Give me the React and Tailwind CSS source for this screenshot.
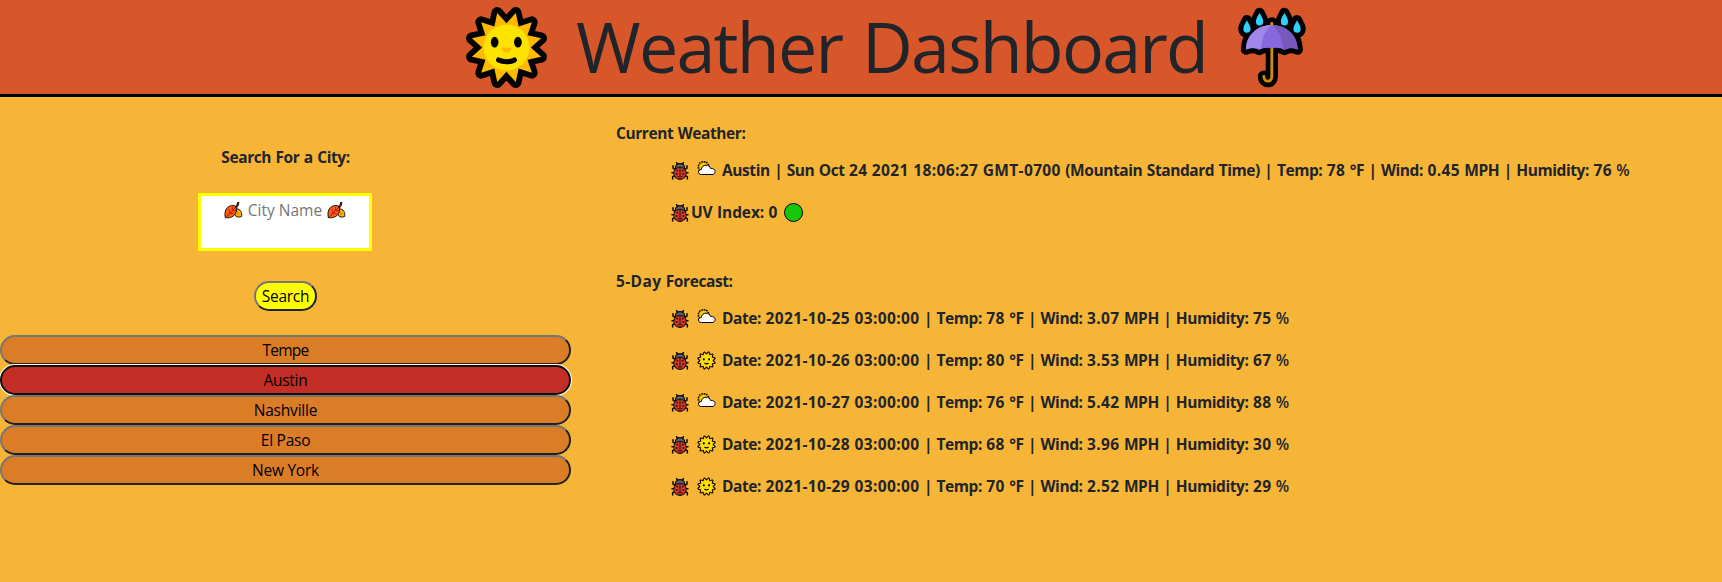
import React from "react";

const CITIES = [
  { name: "Tempe", tracking: "tracking-[-0.75px]" },
  { name: "Austin", tracking: "tracking-[-0.3px]", active: true },
  { name: "Nashville", tracking: "tracking-[-0.2px]" },
  { name: "El Paso", tracking: "tracking-[-0.25px]" },
  { name: "New York", tracking: "tracking-[-0.25px]" },
];

const FORECAST = [
  { icon: "cloud", text: "Date: 2021-10-25 03:00:00 | Temp: 78 °F | Wind: 3.07 MPH | Humidity: 75 %" },
  { icon: "sun", text: "Date: 2021-10-26 03:00:00 | Temp: 80 °F | Wind: 3.53 MPH | Humidity: 67 %" },
  { icon: "cloud", text: "Date: 2021-10-27 03:00:00 | Temp: 76 °F | Wind: 5.42 MPH | Humidity: 88 %" },
  { icon: "sun", text: "Date: 2021-10-28 03:00:00 | Temp: 68 °F | Wind: 3.96 MPH | Humidity: 30 %" },
  { icon: "sun", text: "Date: 2021-10-29 03:00:00 | Temp: 70 °F | Wind: 2.52 MPH | Humidity: 29 %" },
];

/* Rays sit symmetrically either side of the vertical axis. */
function starPoints(count, outer, inner) {
  const pts = [];
  for (let i = 0; i < count * 2; i++) {
    const r = i % 2 === 0 ? outer : inner;
    const a = (Math.PI / count) * (i + 1) - Math.PI / 2;
    pts.push(`${(r * Math.cos(a)).toFixed(2)},${(r * Math.sin(a)).toFixed(2)}`);
  }
  return pts.join(" ");
}

const SUN_BIG = starPoints(12, 35.4, 24);
const SUN_SMALL = starPoints(12, 36, 26);

function SunFace({ className, small }) {
  const pts = small ? SUN_SMALL : SUN_BIG;
  return (
    <svg className={className} viewBox="-41 -41 82 82" aria-hidden="true">
      <polygon points={pts} fill="#000" stroke="#000" strokeWidth={small ? 9 : 11.5} strokeLinejoin="round" />
      <polygon points={pts} fill={small ? "#ffc800" : "#ffb900"} />
      <circle r={small ? 24 : 22.7} fill="#fde300" />
      <ellipse cx="-11.7" cy="-5.2" rx="3.8" ry="5.3" />
      <ellipse cx="11.3" cy="-5.2" rx="3.8" ry="5.3" />
      <path d="M-5 0.3H5C4.4 3.6 2.4 5.3 0 5.3S-4.4 3.6-5 0.3Z" fill="#ffb900" />
      <path d="M-7.8 12.3C-3.6 14.6 3.6 14.6 7.8 12.3" fill="none" stroke="#000" strokeWidth="5" strokeLinecap="round" />
    </svg>
  );
}

function Umbrella({ className }) {
  const canopy =
    "M197 149C197 106 231 75 275 75S353 106 353 149C341 143 326 143 313 150C301 143 288 142 275 145C262 142 249 143 237 150C224 143 209 143 197 149Z";
  const handle = "M275 70V229C275 250 251 248 251 230";
  const drops = ["M200 60C204 69 211 77 211 87A11 11 0 0 1 189 87C189 77 196 69 200 60Z",
    "M238 38C242 47 249 55 249 65A11 11 0 0 1 227 65C227 55 234 47 238 38Z",
    "M313 38C317 47 324 55 324 65A11 11 0 0 1 302 65C302 55 309 47 313 38Z",
    "M351 60C355 69 362 77 362 87A11 11 0 0 1 340 87C340 77 347 69 351 60Z"];
  return (
    <svg className={className} viewBox="173 21 205 243" aria-hidden="true">
      <g fill="#000" stroke="#000" strokeLinejoin="round" strokeLinecap="round">
        <path d={canopy} strokeWidth="31" />
        <path d={handle} fill="none" strokeWidth="37" />
        {drops.map((d) => <path key={d} d={d} strokeWidth="31" />)}
      </g>
      {drops.map((d) => <path key={d} d={d} fill="#30d0fb" />)}
      <path d={handle} fill="none" stroke="#d18d00" strokeWidth="8.5" strokeLinecap="round" />
      <path d={canopy} fill="#8669dd" />
      <path d="M197 149C197 106 231 75 275 75C255 90 243 118 243 147C228 143 209 143 197 149Z" fill="#9f88ea" />
      <path d="M353 149C353 106 319 75 275 75C295 90 308 118 309 147C326 143 341 143 353 149Z" fill="#7759bd" />
      <rect x="271" y="68" width="8" height="8" fill="#d18d00" />
    </svg>
  );
}

function Ladybug({ className }) {
  return (
    <svg className={className} viewBox="0 0 54 54" aria-hidden="true">
      <g fill="none" stroke="#0b0b0b" strokeWidth="4.6" strokeLinecap="round">
        <path d="M20 8L17 2M34 8L37 2M12 22L6 18V11M42 22L48 18V11M10 32H3M44 32H51M12 40L5 44V51M42 40L49 44V51" />
      </g>
      <path d="M13 20C12 10 19 5 27 5S42 10 41 20Z" fill="#5a5f66" stroke="#0b0b0b" strokeWidth="3.4" />
      <ellipse cx="27" cy="34" rx="18.5" ry="18.5" fill="#d63a28" stroke="#1c1413" strokeWidth="3.2" />
      <path d="M27 15V51" stroke="#3b1512" strokeWidth="3.4" />
      <g fill="#35100e">
        <circle cx="19" cy="26" r="2.8" />
        <circle cx="35" cy="26" r="2.8" />
        <circle cx="17" cy="36" r="2.8" />
        <circle cx="37" cy="36" r="2.8" />
        <circle cx="22" cy="44" r="2.3" />
        <circle cx="32" cy="44" r="2.3" />
      </g>
    </svg>
  );
}

function CloudSun({ className }) {
  return (
    <svg className={className} viewBox="0 0 57 57" aria-hidden="true">
      <circle cx="20" cy="18" r="16" fill="none" stroke="#000" strokeWidth="5" strokeDasharray="4.2 3.2" />
      <circle cx="20" cy="18" r="14.5" fill="#fcc800" stroke="#1b1500" strokeWidth="1.6" />
      <path
        d="M13 40.5C7 40.5 4.5 36.5 4.5 33C4.5 28.5 8 26 12.5 26C14 17 20 12.5 27 12.5C34 12.5 38.5 16 40.5 22C49 21.5 54.5 26 54.5 31.5C54.5 37 50.5 40.5 45 40.5Z"
        fill="#fff"
        stroke="#000"
        strokeWidth="3"
        strokeLinejoin="round"
      />
    </svg>
  );
}

function Leaf({ className }) {
  return (
    <svg className={className} viewBox="0 0 57 53" aria-hidden="true">
      <path d="M36 22C45 20 54 28 54 36C54 40 55 43 54 45C47 49 37 47 33 41C30 34 31 26 36 22Z" fill="#fdb40a" stroke="#111" strokeWidth="3" />
      <path d="M41 28L43 43M38 37L50 35" stroke="#d98200" strokeWidth="2" fill="none" />
      <path d="M3 49C1 38 1 26 9 18C17 10 29 8 37 15C40 24 38 35 30 42C22 49 12 50 3 49Z" fill="#f7630c" stroke="#111" strokeWidth="3" strokeLinejoin="round" />
      <path d="M6 47L37 15M16 36L15 22M16 36L30 36M25 27L25 15M25 27L36 27" stroke="#c8201c" strokeWidth="3.4" fill="none" />
      <path d="M37 16C42 12 42 7 43 3" stroke="#111" strokeWidth="7" strokeLinecap="round" fill="none" />
      <path d="M36 17C41 12 42 8 43 4" stroke="#a4161a" strokeWidth="2.6" fill="none" />
    </svg>
  );
}

/* Words, figures and spaces each carry their own tracking. */
function Line({ text }) {
  return (
    <span className="whitespace-pre text-[15.5px] font-bold leading-6">
      {text.split(/( )/).map((t, i) => {
        if (t === " ") return <span key={i} className="tracking-[0.38px]"> </span>;
        if (t === "%") return <span key={i} className="font-semibold">%</span>;
        if (t === "UV" || t === "Index:") return <span key={i} className="tracking-[-0.1px]">{t}</span>;
        if (/\d/.test(t)) return <span key={i} className="tracking-[0.37px]">{t}</span>;
        return <span key={i} className="tracking-[-0.42px]">{t}</span>;
      })}
    </span>
  );
}

function WeatherRow({ icon, text }) {
  return (
    <li className="flex h-6 items-center">
      <Ladybug className="mt-px h-[18px] w-[18px]" />
      {icon === "cloud" && <CloudSun className="mt-px ml-2 h-[19px] w-[19px]" />}
      {icon === "sun" && <SunFace small className="mt-px ml-2 h-[19px] w-[19px]" />}
      <span className="ml-[6px] flex">
        <Line text={text} />
      </span>
    </li>
  );
}

export default function App() {
  return (
    <div className="flex min-h-[582px] flex-col bg-[#f7b538] font-['Open_Sans','Noto_Sans',sans-serif] text-[#212529]">
      <header className="flex h-[97px] items-center border-b-[3px] border-black bg-[#d8572a] pl-[465px]">
        <SunFace className="mt-px h-[83px] w-[83px]" />
        <h1 className="ml-[28px] w-[627px] whitespace-pre pb-px text-[70px] leading-[93px]">
          <span className="tracking-[-1.75px]">Weather</span>
          <span className="tracking-[1.5px]"> </span>
          <span className="tracking-[-1.8px]">Dashboard</span>
        </h1>
        <Umbrella className="mt-px ml-[35px] h-[81px] w-[68px]" />
      </header>

      <div className="flex">
        <section className="flex w-[571px] flex-col items-center pt-12">
          <h2 className="flex"><Line text="Search For a City:" /></h2>
          <div className="mt-6 mr-px flex h-[58px] w-[174px] justify-center border-[3px] border-[#ff0] bg-white pt-0.5">
            <div className="flex h-6 items-center text-[15.5px] leading-6 text-[#757575]">
              <Leaf className="h-[17px] w-[19px]" />
              <span className="mx-[5px] whitespace-pre">City Name</span>
              <Leaf className="h-[17px] w-[19px]" />
            </div>
          </div>
          <button className="mt-[30px] h-[30px] w-[63px] rounded-[15px] border-2 border-t-[#767676] border-r-[#212121] border-b-[#212121] border-l-[#767676] bg-[#ff0] text-[15.5px] leading-[26px] tracking-[-0.3px] text-black">
            Search
          </button>
          <div className="mt-6 flex w-full flex-col">
            {CITIES.map((c) => (
              <button
                key={c.name}
                className={
                  "h-[30px] w-full rounded-[15px] border-2 text-[15.5px] leading-[26px] text-black " +
                  c.tracking +
                  (c.active
                    ? " border-[#101010] bg-[#c32f27] shadow-[0_0_0_1px_#fff]"
                    : " border-t-[#767676] border-r-[#212121] border-b-[#212121] border-l-[#767676] bg-[#db7c26]")
                }
              >
                {c.name}
              </button>
            ))}
          </div>
        </section>

        <section className="pt-6 pl-[45px]">
          <h2 className="flex"><Line text="Current Weather:" /></h2>
          <ul className="mt-[13px] flex flex-col gap-[18px] pl-[55px]">
            <WeatherRow
              icon="cloud"
              text="Austin | Sun Oct 24 2021 18:06:27 GMT-0700 (Mountain Standard Time) | Temp: 78 °F | Wind: 0.45 MPH | Humidity: 76 %"
            />
            <li className="flex h-6 items-center">
              <Ladybug className="mt-px h-[18px] w-[18px]" />
              <span className="ml-[2px] flex"><Line text="UV Index: 0" /></span>
              <span className="mt-px ml-[6px] h-[19px] w-[19px] rounded-full border border-black bg-[#16c60c]" />
            </li>
          </ul>
          <h2 className="mt-[45px] flex"><Line text="5-Day Forecast:" /></h2>
          <ul className="mt-[13px] flex flex-col gap-[18px] pl-[55px]">
            {FORECAST.map((f) => <WeatherRow key={f.text} icon={f.icon} text={f.text} />)}
          </ul>
        </section>
      </div>
    </div>
  );
}
